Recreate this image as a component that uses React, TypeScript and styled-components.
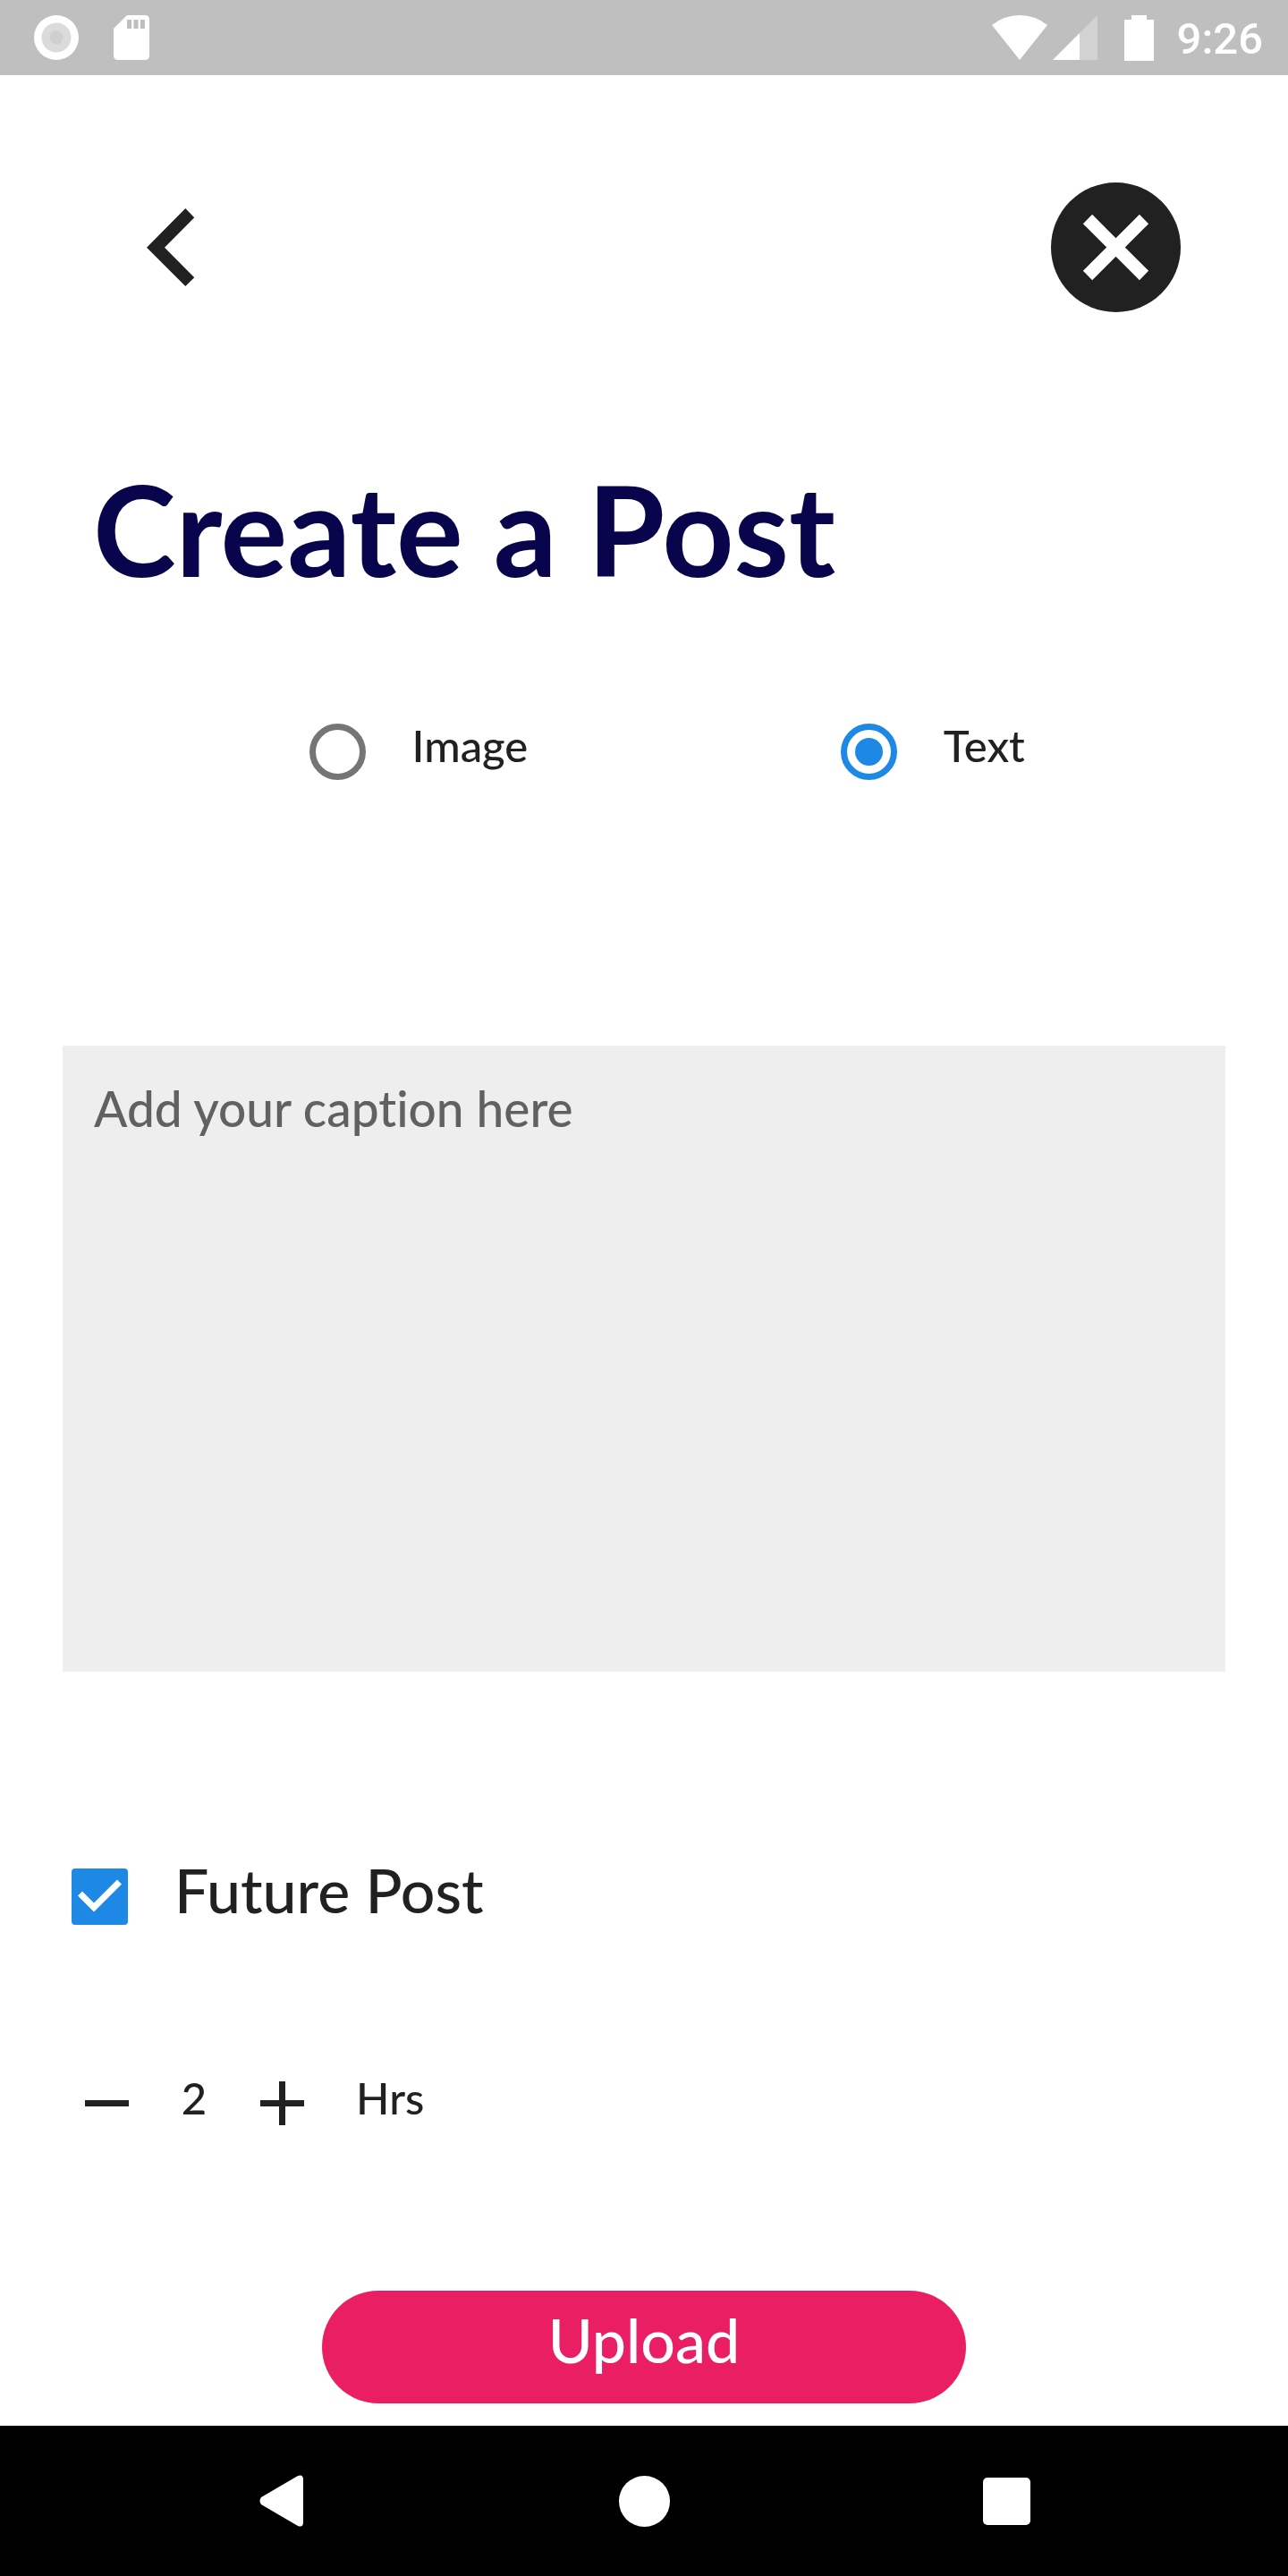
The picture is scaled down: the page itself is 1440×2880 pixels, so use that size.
import React, { useState } from "react";
import styled, { createGlobalStyle } from "styled-components";

const ink = "#212121";
const blue = "#1e88e5";

const GlobalStyle = createGlobalStyle`
  *, *::before, *::after { box-sizing: border-box; }
  body { margin: 0; background: #fff; }
  button, input, textarea { font: inherit; color: inherit; margin: 0; }
`;

const Screen = styled.div`
  display: flex;
  flex-direction: column;
  min-height: 100vh;
  background: #fff;
  color: ${ink};
  font-family: Lato, "Open Sans", sans-serif;
  font-size: 49px;
  font-weight: 500;
  line-height: 60px;
`;

const StatusBar = styled.div`
  display: flex;
  align-items: center;
  justify-content: space-between;
  height: 84px;
  padding: 0 28px 0 38px;
  background: #bfbfbf;
  color: #fff;
`;

const StatusGroup = styled.div<{ $gap: number }>`
  display: flex;
  align-items: center;
  gap: ${(p) => p.$gap}px;
`;

const Clock = styled.time`
  font-family: Roboto, sans-serif;
  font-weight: 500;
  padding-top: 4px;
`;

const SignalIcons = styled.div`
  display: flex;
  gap: 6px;
  margin-right: 4px;
`;

const Icon = styled.svg`
  display: block;
  flex: none;
`;

const Main = styled.main`
  flex: 1;
`;

const Header = styled.header`
  display: flex;
  align-items: center;
  justify-content: space-between;
  padding: 120px 120px 0 118px;
`;

const IconButton = styled.button<{ $size: number }>`
  display: grid;
  place-items: center;
  width: ${(p) => p.$size}px;
  height: ${(p) => p.$size}px;
  padding: 0;
  border: 0;
  background: none;
  cursor: pointer;
`;

const Title = styled.h1`
  margin: 158px 104px 0;
  color: #08054c;
  font-size: 140px;
  line-height: 168px;
  font-weight: 700;
`;

const Form = styled.form`
  display: flex;
  flex-direction: column;
`;

const PostTypes = styled.fieldset`
  display: grid;
  grid-template-columns: 57fr 48fr;
  margin: 128px 0 0;
  padding: 0 0 0 24%;
  border: 0;
`;

const Choice = styled.label<{ $large?: boolean }>`
  display: flex;
  align-items: center;
  gap: 52px;
  font-size: ${(p) => (p.$large ? 68 : 49)}px;
  line-height: ${(p) => (p.$large ? 84 : 60)}px;
`;

const ChoiceText = styled.span`
  padding-bottom: 14px;
`;

const Radio = styled.input`
  appearance: none;
  display: grid;
  place-items: center;
  width: 63px;
  height: 63px;
  border: 7px solid #757575;
  border-radius: 50%;

  &:checked { border-color: ${blue}; }
  &:checked::before {
    content: "";
    width: 31px;
    height: 31px;
    border-radius: 50%;
    background: ${blue};
  }
`;

const Caption = styled.textarea`
  display: block;
  height: 700px;
  margin: 292px 70px 0;
  padding: 36px 35px;
  border: 0;
  outline: 0;
  resize: none;
  background: #eee;
  font-size: 55px;
  line-height: 68px;
  font-variant-ligatures: none;

  &::placeholder { color: #616161; opacity: 1; }
`;

const Schedule = styled.div`
  margin-top: 202px;
  padding-left: 80px;
`;

const Checkbox = styled.input`
  appearance: none;
  width: 63px;
  height: 63px;
  border: 7px solid #757575;
  border-radius: 4px;

  &:checked {
    border: 0;
    background: ${blue};
  }
  &:checked::before {
    content: "";
    display: block;
    width: 63px;
    height: 63px;
    background: #fff;
    clip-path: polygon(7px 31px, 12px 26px, 25px 39px, 51px 13px, 56px 18px, 25px 49px);
  }
`;

const Stepper = styled.div`
  display: flex;
  align-items: center;
  margin-top: 140px;
  padding-left: 77px;
`;

const Hours = styled.output`
  width: 112px;
  padding-bottom: 12px;
  text-align: center;
`;

const Unit = styled.span`
  margin-left: 41px;
  padding-bottom: 12px;
`;

const Upload = styled.button`
  align-self: center;
  width: 50%;
  height: 126px;
  margin: 168px 0 24px;
  padding: 0 0 16px;
  border: 0;
  border-radius: 63px;
  background: #e91e63;
  color: #fff;
  font-size: 68px;
  line-height: 84px;
  cursor: pointer;
`;

const NavBar = styled.nav`
  display: flex;
  align-items: center;
  justify-content: center;
  gap: 321px;
  height: 168px;
  background: #000;
`;

export default function App() {
  const [type, setType] = useState("text");
  const [future, setFuture] = useState(true);
  const [hours, setHours] = useState(2);

  return (
    <Screen>
      <GlobalStyle />
      <StatusBar>
        <StatusGroup $gap={39}>
          <Icon width="50" height="50" viewBox="0 0 50 50" aria-hidden="true">
            <circle cx="25" cy="25" r="25" fill="#fff" />
            <circle cx="25" cy="25" r="16.5" fill="#dbdbdb" />
            <circle cx="25" cy="25" r="7.5" fill="#cfcfcf" />
          </Icon>
          <Icon width="40" height="50" viewBox="0 0 40 50" aria-hidden="true">
            <path d="M15 0H35Q40 0 40 5V45Q40 50 35 50H5Q0 50 0 45V15Z" fill="#fff" />
            <path d="M15 5h5v10h-5zM22.5 5h5v10h-5zM30 5h5v10h-5z" fill="#bfbfbf" />
          </Icon>
        </StatusGroup>
        <StatusGroup $gap={26}>
          <SignalIcons>
            <Icon width="62" height="50" viewBox="0 0 62 50" aria-hidden="true">
              <path d="M0 11Q14 0 31 0T62 11L31 50Z" fill="#fff" />
            </Icon>
            <Icon width="50" height="50" viewBox="0 0 50 50" aria-hidden="true">
              <path d="M50 0V50H0Z" fill="#d2d2d2" />
              <path d="M30 20V50H0Z" fill="#fff" />
            </Icon>
          </SignalIcons>
          <Icon width="33" height="51" viewBox="0 0 33 51" aria-hidden="true">
            <path d="M8 0H25V5H33V51H0V5H8Z" fill="#fff" />
          </Icon>
          <Clock>9:26</Clock>
        </StatusGroup>
      </StatusBar>

      <Main>
        <Header>
          <IconButton $size={145} type="button" aria-label="Back">
            <Icon width="53" height="87" viewBox="0 0 53 87" aria-hidden="true">
              <path d="M43.3 0L53.3 10.2L20 43.7L53.3 77.2L43.3 87L0 43.7Z" fill={ink} />
            </Icon>
          </IconButton>
          <IconButton $size={145} type="button" aria-label="Close">
            <Icon width="145" height="145" viewBox="0 0 145 145" aria-hidden="true">
              <circle cx="72.5" cy="72.5" r="72.5" fill={ink} />
              <path d="M41 41L104 104M104 41L41 104" stroke="#fff" strokeWidth="14.5" />
            </Icon>
          </IconButton>
        </Header>

        <Title>Create a Post</Title>

        <Form onSubmit={(e) => e.preventDefault()}>
          <PostTypes aria-label="Post type">
            <Choice>
              <Radio type="radio" name="type" checked={type === "image"} onChange={() => setType("image")} />
              <ChoiceText>Image</ChoiceText>
            </Choice>
            <Choice>
              <Radio type="radio" name="type" checked={type === "text"} onChange={() => setType("text")} />
              <ChoiceText>Text</ChoiceText>
            </Choice>
          </PostTypes>

          <Caption aria-label="Caption" placeholder="Add your caption here" />

          <Schedule>
            <Choice $large>
              <Checkbox type="checkbox" checked={future} onChange={() => setFuture(!future)} />
              <ChoiceText>Future Post</ChoiceText>
            </Choice>
          </Schedule>

          <Stepper>
            <IconButton $size={84} type="button" aria-label="Fewer hours" onClick={() => setHours(Math.max(0, hours - 1))}>
              <Icon width="49" height="49" viewBox="0 0 49 49" aria-hidden="true">
                <path d="M0 24.5H49" stroke={ink} strokeWidth="7" />
              </Icon>
            </IconButton>
            <Hours>{hours}</Hours>
            <IconButton $size={84} type="button" aria-label="More hours" onClick={() => setHours(hours + 1)}>
              <Icon width="49" height="49" viewBox="0 0 49 49" aria-hidden="true">
                <path d="M0 24.5H49M24.5 0V49" stroke={ink} strokeWidth="7" />
              </Icon>
            </IconButton>
            <Unit>Hrs</Unit>
          </Stepper>

          <Upload type="submit">Upload</Upload>
        </Form>
      </Main>

      <NavBar aria-label="System">
        <IconButton $size={84} type="button" aria-label="System back">
          <Icon width="50" height="58" viewBox="0 0 50 58" aria-hidden="true">
            <path d="M2 25L43 1Q49 -1 49 5V53Q49 59 43 57L2 33Q-1 29 2 25Z" fill="#fff" />
          </Icon>
        </IconButton>
        <IconButton $size={84} type="button" aria-label="Home">
          <Icon width="57" height="57" viewBox="0 0 57 57" aria-hidden="true">
            <circle cx="28.5" cy="28.5" r="28.5" fill="#fff" />
          </Icon>
        </IconButton>
        <IconButton $size={84} type="button" aria-label="Recent apps">
          <Icon width="53" height="53" viewBox="0 0 53 53" aria-hidden="true">
            <rect width="53" height="53" rx="5" fill="#fff" />
          </Icon>
        </IconButton>
      </NavBar>
    </Screen>
  );
}
